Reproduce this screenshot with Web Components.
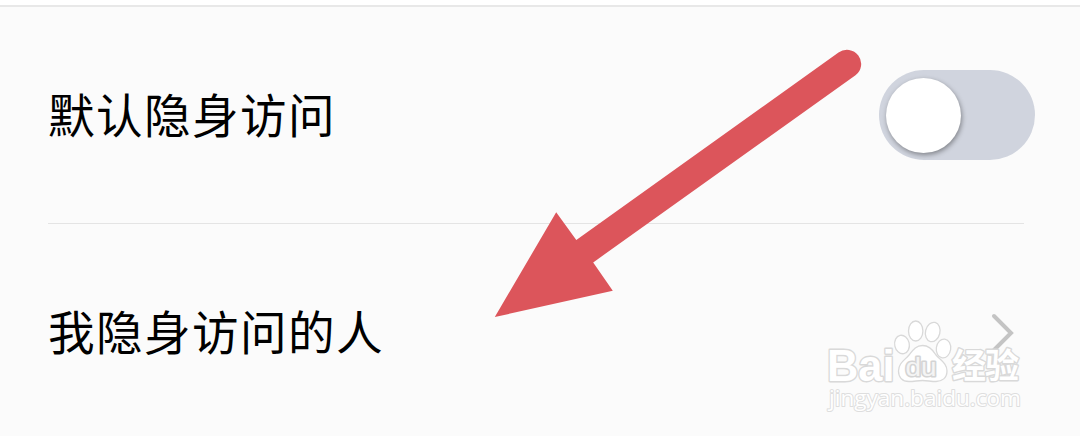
<!DOCTYPE html>
<html lang="zh-CN">
<head>
<meta charset="UTF-8">
<title>隐身访问</title>
<style>
    body{
        margin:0;
        background:#fbfbfb;
        font-family:"Noto Sans CJK SC",sans-serif;
    }
</style>
</head>
<body>
<settings-panel>
    <settings-row>
        默认隐身访问
        <toggle-switch slot="action"></toggle-switch>
    </settings-row>
    <settings-row class="last">
        我隐身访问的人
        <chevron-icon slot="action"></chevron-icon>
    </settings-row>
    <pointer-arrow slot="overlay"></pointer-arrow>
    <site-watermark slot="overlay"></site-watermark>
</settings-panel>

<script>
// 页面容器
class SettingsPanel extends HTMLElement{
    constructor(){
        super();
        this.attachShadow({mode:'open'});
        this.shadowRoot.innerHTML = `
        <style>
        :host{
            display:block;
            position:relative;
            box-sizing:border-box;
            height:436px;
            padding-top:5px;
            overflow:hidden;
            background:linear-gradient(#fff 5px,#fbfbfb 5px);
        }
        .list{
            border-top:2px solid #e8e8e8;
        }
        </style>
        <div class="list"><slot></slot></div>
        <slot name="overlay"></slot>
        `;
    }
}

// 一行设置项，右侧内容放在 action 里
class SettingsRow extends HTMLElement{
    constructor(){
        super();
        this.attachShadow({mode:'open'});
        this.shadowRoot.innerHTML = `
        <style>
        :host{
            display:flex;
            align-items:center;
            justify-content:space-between;
            box-sizing:border-box;
            height:217px;
            margin:0 56px 0 48px;
            border-bottom:1px solid #e4e4e4;
            color:#000;
            font-size:46.6px;
            letter-spacing:1.4px;
            line-height:70px;
        }
        :host(.last){
            height:212px;
            padding-top:6px;
            border-bottom:0;
        }
        .label{
            padding-bottom:5px;
        }
        :host(.last) .label{
            padding-bottom:7px;
        }
        .action{
            display:flex;
            margin-right:-11px;
        }
        :host(.last) .action{
            margin-right:9px;
        }
        </style>
        <div class="label"><slot></slot></div>
        <div class="action"><slot name="action"></slot></div>
        `;
    }
}

class ToggleSwitch extends HTMLElement{
    constructor(){
        super();
        this.attachShadow({mode:'open'});
        this.shadowRoot.innerHTML = `
        <style>
        :host{
            display:flex;
            align-items:center;
            box-sizing:border-box;
            width:156px;
            height:90px;
            padding-left:7px;
            border-radius:45px;
            background:#d0d4de;
        }
        .knob{
            width:75px;
            height:75px;
            border-radius:50%;
            background:#fff;
            box-shadow:1px 2px 5px rgba(0,0,0,.38);
        }
        </style>
        <div class="knob"></div>
        `;
    }
}

class ChevronIcon extends HTMLElement{
    constructor(){
        super();
        this.attachShadow({mode:'open'});
        this.shadowRoot.innerHTML = `
        <style>
        :host{ display:block; }
        svg{ display:block; }
        </style>
        <svg width="24" height="40" viewBox="0 0 24 40">
            <path d="M3 3 20 20 3 37" fill="none" stroke="#c4c4c4" stroke-width="4" stroke-linecap="round"/>
        </svg>
        `;
    }
}

// 红色箭头
class PointerArrow extends HTMLElement{
    constructor(){
        super();
        this.attachShadow({mode:'open'});
        this.shadowRoot.innerHTML = `
        <style>
        :host{
            position:absolute;
            left:480px;
            top:30px;
        }
        svg{ display:block; }
        </style>
        <svg width="400" height="300" viewBox="480 30 400 300" fill="#dc555b">
            <path d="M494.8 317 556.2 212.3 576.3 240 838.5 52.6A14 14 0 0 1 855.5 75.3L593.2 262.4 612.8 290.8Z"/>
        </svg>
        `;
    }
}

// 右下角水印
class SiteWatermark extends HTMLElement{
    constructor(){
        super();
        this.attachShadow({mode:'open'});
        this.shadowRoot.innerHTML = `
        <style>
        :host{
            position:absolute;
            left:810px;
            top:300px;
        }
        svg{
            display:block;
            fill:#fff;
            stroke:#d9d9d9;
            stroke-linejoin:round;
        }
        text{
            paint-order:stroke;
            stroke-width:2.8px;
            font-family:"Liberation Sans","Noto Sans CJK SC",sans-serif;
            font-weight:bold;
        }
        .du{
            fill:#f4f4f4;
            stroke:#d4d4d4;
            stroke-width:3.2px;
            font-weight:normal;
        }
        .url{
            font-family:"Open Sans",sans-serif;
            font-weight:normal;
            stroke:#dedede;
            stroke-width:2px;
        }
        </style>
        <svg width="230" height="136" viewBox="810 300 230 136">
            <text x="827" y="380.5" font-size="44" textLength="67.5" lengthAdjust="spacingAndGlyphs">Bai</text>
            <g stroke-width="1.3">
                <ellipse cx="902" cy="344.5" rx="7.3" ry="9.3" transform="rotate(-12 902 344.5)"/>
                <ellipse cx="915.7" cy="331" rx="7.2" ry="10"/>
                <ellipse cx="932.7" cy="332" rx="7.2" ry="9.8" transform="rotate(14 932.7 332)"/>
                <ellipse cx="943.5" cy="348.5" rx="7.2" ry="9.5" transform="rotate(8 943.5 348.5)"/>
                <path d="M922.5 345.5C929 345.5 933 350 936 355 940 360 947 363 947 371 947 378 942 381.5 936 381.5 931 381.5 927 380.5 922.5 380.5 918 380.5 914 381.5 909 381.5 902 381.5 898.5 377 898.5 371 898.5 363 905 360 909 355 913 350 916 345.5 922.5 345.5Z"/>
            </g>
            <text class="du" x="905.5" y="375.5" font-size="26" textLength="31" lengthAdjust="spacingAndGlyphs">du</text>
            <text x="952" y="378" font-size="34" textLength="67">经验</text>
            <text class="url" x="829" y="406" font-size="22.5" textLength="192" lengthAdjust="spacingAndGlyphs">jingyan.baidu.com</text>
        </svg>
        `;
    }
}

customElements.define('settings-panel',SettingsPanel);
customElements.define('settings-row',SettingsRow);
customElements.define('toggle-switch',ToggleSwitch);
customElements.define('chevron-icon',ChevronIcon);
customElements.define('pointer-arrow',PointerArrow);
customElements.define('site-watermark',SiteWatermark);
</script>
</body>
</html>
